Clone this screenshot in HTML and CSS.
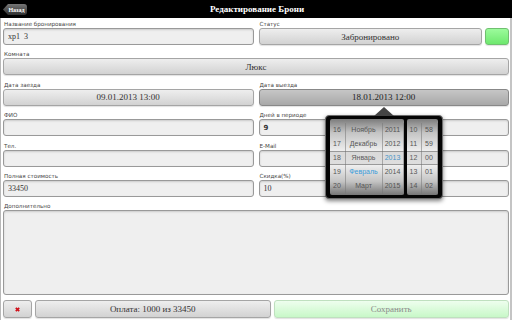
FILE: index.html
```html
<!DOCTYPE html>
<html lang="ru">
<head>
<meta charset="utf-8">
<title>Редактирование Брони</title>
<link rel="stylesheet" href="styles.css">
</head>
<body>
<header class="topbar">
  <button class="back">Назад</button>
  <h1 class="title">Редактирование Брони</h1>
  <span class="spacer"></span>
</header>
<main class="form">
  <div class="grid">
    <div class="field">
      <label class="label">Название бронирования</label>
      <div class="input">хр1&nbsp; 3</div>
    </div>
    <div class="field">
      <label class="label">Статус</label>
      <div class="status-row">
        <div class="btn">Забронировано</div>
        <div class="btn green"></div>
      </div>
    </div>
    <div class="field wide">
      <label class="label">Комната</label>
      <div class="btn">Люкс</div>
    </div>
    <div class="field">
      <label class="label">Дата заезда</label>
      <div class="btn">09.01.2013 13:00</div>
    </div>
    <div class="field date-out">
      <label class="label">Дата выезда</label>
      <div class="btn pressed">18.01.2013 12:00</div>
      <div class="picker">
        <div class="wheel wheel-date">
          <div class="col col-day"><span>16</span><span>17</span><span>18</span><span>19</span><span>20</span></div>
          <div class="col col-month"><span>Ноябрь</span><span>Декабрь</span><span>Январь</span><span class="sel">Февраль</span><span>Март</span></div>
          <div class="col col-year"><span>2011</span><span>2012</span><span class="sel">2013</span><span>2014</span><span>2015</span></div>
          <div class="band"></div>
        </div>
        <div class="wheel wheel-time">
          <div class="col col-hour"><span>10</span><span>11</span><span>12</span><span>13</span><span>14</span></div>
          <div class="col col-min"><span>58</span><span>59</span><span>00</span><span>01</span><span>02</span></div>
          <div class="band"></div>
        </div>
      </div>
    </div>
    <div class="field">
      <label class="label">ФИО</label>
      <div class="input"></div>
    </div>
    <div class="field">
      <label class="label">Дней в периоде</label>
      <div class="input sans">9</div>
    </div>
    <div class="field">
      <label class="label">Тел.</label>
      <div class="input"></div>
    </div>
    <div class="field">
      <label class="label">E-Mail</label>
      <div class="input"></div>
    </div>
    <div class="field">
      <label class="label">Полная стоимость</label>
      <div class="input">33450</div>
    </div>
    <div class="field">
      <label class="label">Скидка(%)</label>
      <div class="input">10</div>
    </div>
  </div>
  <div class="notes">
    <label class="label">Дополнительно</label>
    <div class="input area"></div>
  </div>
  <div class="actions">
    <div class="btn small"><svg class="xicon" width="5" height="5" viewBox="0 0 5 5"><path d="M0.8 0.8 L4.2 4.2 M4.2 0.8 L0.8 4.2" stroke="#d0101a" stroke-width="1.7"/></svg></div>
    <div class="btn">Оплата: 1000 из 33450</div>
    <div class="btn save">Сохранить</div>
  </div>
</main>
</body>
</html>
```

FILE: styles.css
```css
* { box-sizing: border-box; margin: 0; padding: 0; }
html, body { width: 512px; height: 320px; overflow: hidden; background: #fff; }
body {
  font-family: "DejaVu Sans", sans-serif;
  display: flex;
  flex-direction: column;
}

.topbar {
  flex: none;
  height: 18px;
  background: #000;
  display: grid;
  grid-template-columns: 1fr auto 1fr;
  align-items: center;
}
.back {
  justify-self: start;
  margin-left: 3px;
  margin-top: 1px;
  width: 24px;
  height: 11px;
  border: none;
  border-radius: 0 3px 3px 0;
  background: linear-gradient(#777, #2e2e2e);
  color: #fff;
  font: bold 6px "Liberation Serif", serif;
  padding-left: 3px;
  clip-path: polygon(0 50%, 5px 0, 100% 0, 100% 100%, 5px 100%);
}
.title {
  color: #fff;
  font: bold 9px "Liberation Serif", serif;
  padding-left: 2px;
}

.form {
  flex: 1;
  display: flex;
  flex-direction: column;
  border-left: 1px solid #b8b8b8;
  border-right: 2px solid #c4c4c4;
  padding: 0 1px 2px 2px;
}
.grid {
  display: grid;
  grid-template-columns: 1fr 1fr;
  column-gap: 5px;
}
.field {
  display: flex;
  flex-direction: column;
  margin-bottom: 3.4px;
}
.field.wide { grid-column: 1 / 3; }
.date-out { position: relative; }

.label {
  height: 10px;
  line-height: 10px;
  font-size: 5.6px;
  color: #444;
  padding-left: 1px;
  padding-top: 1px;
}

.input {
  height: 17px;
  background: #efefef;
  border: 1px solid #999;
  border-radius: 3px;
  box-shadow: inset 0 1px 2px rgba(0,0,0,0.15);
  font: 8px "Liberation Serif", serif;
  color: #333;
  padding-left: 4px;
  display: flex;
  align-items: center;
}
.input.sans { font: bold 7px "DejaVu Sans", sans-serif; }

.btn {
  height: 17px;
  border: 1px solid #a5a5a5;
  border-radius: 3px;
  background: linear-gradient(#eeeeee, #d2d2d2);
  box-shadow: 0 1px 1px rgba(0,0,0,0.12);
  font: 9px "Liberation Serif", serif;
  color: #333;
  display: flex;
  align-items: center;
  justify-content: center;
}
.btn.pressed {
  background: linear-gradient(#c6c6c6, #a8a8a8);
  border-color: #888;
  color: #222;
}
.status-row { display: flex; gap: 3px; }
.status-row .btn:first-child { flex: 1; }
.btn.green {
  width: 24px;
  background: linear-gradient(#9cfb9c, #6ee86e);
  border-color: #70c070;
}

.notes {
  flex: 1;
  display: flex;
  flex-direction: column;
}
.input.area { flex: 1; height: auto; }

.actions {
  flex: none;
  display: flex;
  gap: 3px;
  margin-top: 5px;
}
.actions .btn { flex: 1; height: 18px; }
.actions .btn.small { flex: none; width: 29px; }
.btn.save {
  background: linear-gradient(#eefeee, #c8f8c8);
  border-color: #bfe0bf;
  color: #8a8a8a;
}

/* date picker popover */
.picker {
  position: absolute;
  left: 66px;
  top: 36px;
  width: 118px;
  height: 84px;
  background: #050505;
  border: 1px solid #6d6d6d;
  border-radius: 4px;
  box-shadow: 0 2px 4px rgba(0,0,0,0.5);
  padding: 3px 4px;
  display: flex;
  gap: 3px;
  z-index: 2;
}
.picker::before {
  content: "";
  position: absolute;
  left: 48px;
  top: -9px;
  border-left: 10px solid transparent;
  border-right: 10px solid transparent;
  border-bottom: 9px solid #444;
}
.wheel {
  position: relative;
  height: 76px;
  border-radius: 2px;
  overflow: hidden;
  display: flex;
  padding-top: 4px;
  background: linear-gradient(#7c7c7c 0%, #c4c4c4 18%, #eeeeee 42%, #f4f4f4 58%, #c4c4c4 82%, #767676 100%);
  font: 7px "Liberation Sans", sans-serif;
  color: #555;
}
.wheel-date { width: 74px; }
.wheel-time { width: 31px; }
.col {
  display: flex;
  flex-direction: column;
  border-right: 1px solid rgba(120,120,120,0.55);
}
.col:last-of-type { border-right: none; }
.col span {
  height: 14px;
  line-height: 14px;
  text-align: center;
}
.col span.sel { color: #3a9ad8; }
.col-day { width: 16px; }
.col-month { width: 37px; }
.col-year { flex: 1; }
.col-hour { width: 15px; }
.col-min { flex: 1; }
.band {
  position: absolute;
  left: 0;
  right: 0;
  top: 32px;
  height: 14px;
  background: rgba(120,120,120,0.18);
  border-top: 1px solid rgba(110,110,110,0.6);
  border-bottom: 1px solid rgba(110,110,110,0.6);
}
```
